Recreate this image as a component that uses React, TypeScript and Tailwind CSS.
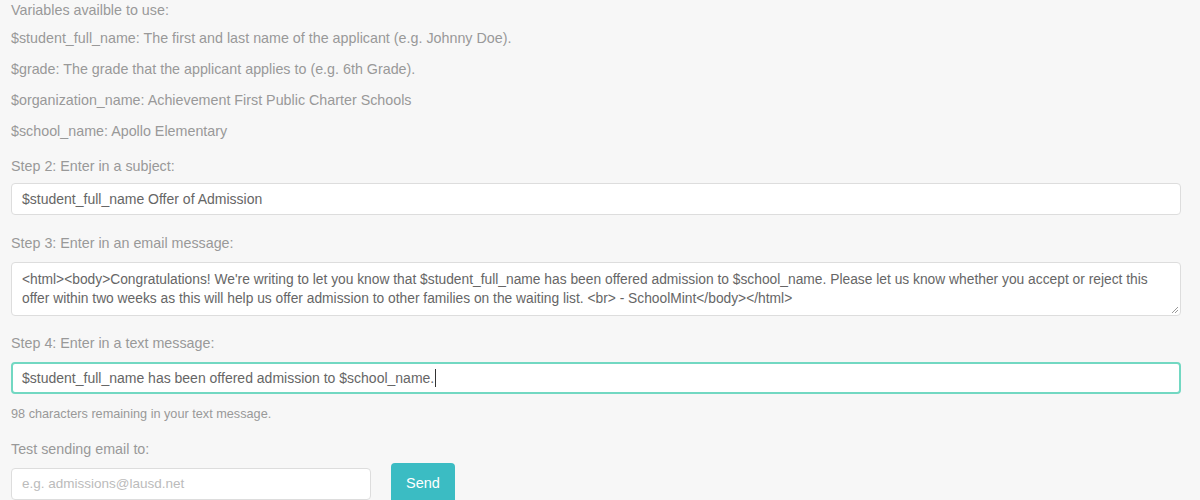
// Email / SMS template editor — variables list, subject, message bodies and a test send.

const VARIABLES = [
  '$student_full_name: The first and last name of the applicant (e.g. Johnny Doe).',
  '$grade: The grade that the applicant applies to (e.g. 6th Grade).',
  '$organization_name: Achievement First Public Charter Schools',
  '$school_name: Apollo Elementary',
]

const EMAIL_BODY =
  "<html><body>Congratulations! We're writing to let you know that $student_full_name has been offered admission to $school_name. Please let us know whether you accept or reject this offer within two weeks as this will help us offer admission to other families on the waiting list. <br> - SchoolMint</body></html>"

export default function App() {
  return (
    <div
      className="min-h-[500px] bg-[#f7f7f7] pl-[11px] pr-[19px] text-[14.3px] leading-5 text-[#999]"
      style={{ fontFamily: '"Liberation Sans", Arial, sans-serif' }}
    >
      <div className="h-5">Variables availble to use:</div>
      <div className="mt-2 flex flex-col gap-[11px]">
        {VARIABLES.map((v) => (
          <div key={v} className="h-5">
            {v}
          </div>
        ))}
      </div>

      <div className="mt-[15px] h-5">Step 2: Enter in a subject:</div>
      <div className="mt-[7px] flex h-8 items-center rounded border border-[#ddd] bg-white px-[10px] text-[14px] text-[#666]">
        $student_full_name Offer of Admission
      </div>

      <div className="mt-[18px] h-5">Step 3: Enter in an email message:</div>
      <div className="relative mt-[9px] h-[54px] rounded border border-[#ddd] bg-white px-[10px] pt-[7px] text-[13.8px] leading-[19px] text-[#666]">
        {EMAIL_BODY}
        <svg className="absolute bottom-[1px] right-[1px]" width="8" height="8" viewBox="0 0 8 8">
          <path d="M7 1 L1 7 M7 4 L4 7" stroke="#999" strokeWidth="1" />
        </svg>
      </div>

      <div className="mt-[17px] h-5">Step 4: Enter in a text message:</div>
      <div className="mt-[9px] flex h-8 items-center rounded border-2 border-[#72d8c2] bg-white px-[9px] text-[14px] text-[#666]">
        $student_full_name has been offered admission to $school_name.
        <span className="ml-px inline-block h-[18px] w-px bg-[#333]" />
      </div>

      <div className="mt-[12px] h-4 text-[12.7px] leading-4">
        98 characters remaining in your text message.
      </div>

      <div className="mt-[17px] h-5">Test sending email to:</div>
      <div className="mt-[4px] flex items-start gap-5">
        <div className="mt-[5px] flex h-8 w-[360px] items-center rounded border border-[#ddd] bg-white px-[10px] text-[13.5px] text-[#bbb]">
          e.g. admissions@lausd.net
        </div>
        <button className="h-[42px] w-[64px] rounded bg-[#3bbcc3] pb-[3px] text-[14.5px] text-white">
          Send
        </button>
      </div>
    </div>
  )
}
